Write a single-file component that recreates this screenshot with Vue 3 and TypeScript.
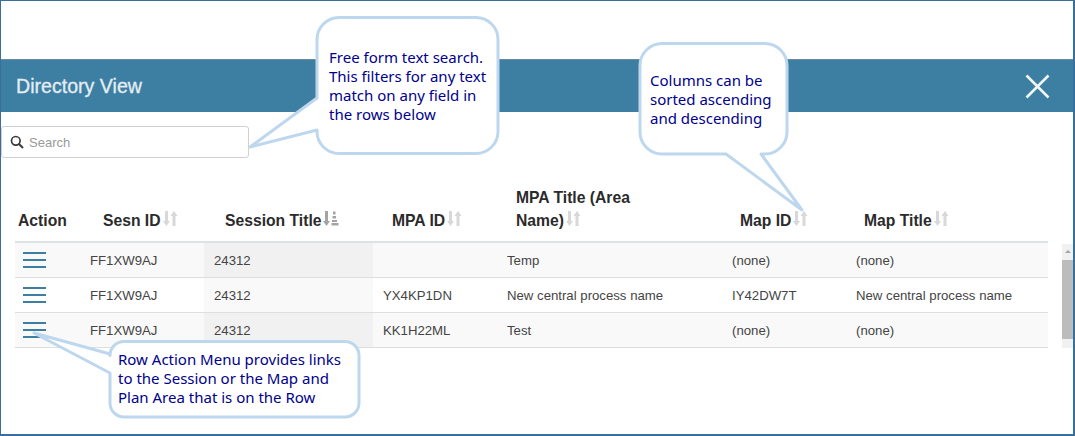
<script setup lang="ts">
interface Row { sesn: string; title: string; mpaId: string; mpaTitle: string; mapId: string; mapTitle: string }
const rows: Row[] = [
  { sesn: 'FF1XW9AJ', title: '24312', mpaId: '', mpaTitle: 'Temp', mapId: '(none)', mapTitle: '(none)' },
  { sesn: 'FF1XW9AJ', title: '24312', mpaId: 'YX4KP1DN', mpaTitle: 'New central process name', mapId: 'IY42DW7T', mapTitle: 'New central process name' },
  { sesn: 'FF1XW9AJ', title: '24312', mpaId: 'KK1H22ML', mpaTitle: 'Test', mapId: '(none)', mapTitle: '(none)' },
]
const heads = [
  { label: 'Sesn ID', active: false },
  { label: 'Session Title', active: true },
  { label: 'MPA ID', active: false },
  { label: 'MPA Title (Area Name)', active: false },
  { label: 'Map ID', active: false },
  { label: 'Map Title', active: false },
]
</script>

<template>
  <div class="frame">
    <header class="bar">
      <h1 class="title">Directory View</h1>
      <svg class="close" width="25" height="25" viewBox="0 0 25 25">
        <path d="M1.5 1.5 L23.5 23.5 M23.5 1.5 L1.5 23.5" stroke="#f1f6f9" stroke-width="2.6" fill="none" />
      </svg>
    </header>

    <div class="search">
      <svg width="14" height="14" viewBox="0 0 14 14">
        <circle cx="5.8" cy="5.8" r="4.3" fill="none" stroke="#3a3a3a" stroke-width="1.7" />
        <path d="M9 9 L13 13" stroke="#3a3a3a" stroke-width="2" />
      </svg>
      <span class="placeholder">Search</span>
    </div>

    <div class="tablewrap">
      <table class="grid">
        <thead>
          <tr>
            <th>Action</th>
            <th v-for="h in heads" :key="h.label">
              {{ h.label }}<svg class="sort" width="17" height="17" viewBox="0 0 17 17">
                <template v-if="h.active">
                  <path d="M3 1 H6 V11 H8 L4.5 16 L1 11 H3 Z" fill="#a4a4a4" />
                  <path d="M11 1.5 h2.5 v3 h-2.5z M10.5 6 h3.5 v2.5 h-3.5z M10 10 h5 v2 h-5z M9.5 13 h7 v2.5 h-7z" fill="#a4a4a4" />
                </template>
                <template v-else>
                  <path d="M3 1 H6 V11 H8 L4.5 16 L1 11 H3 Z" fill="#d8d8d8" />
                  <path d="M10.5 16 H13.5 V6 H15.5 L12 1 L8.5 6 H10.5 Z" fill="#d8d8d8" />
                </template>
              </svg>
            </th>
          </tr>
        </thead>
        <tbody>
          <tr v-for="(r, i) in rows" :key="i">
            <td>
              <svg class="menu" width="23" height="16" viewBox="0 0 23 16">
                <path d="M0 1 H23 M0 8 H23 M0 15 H23" stroke="#3d7ea3" stroke-width="2" />
              </svg>
            </td>
            <td>{{ r.sesn }}</td>
            <td>{{ r.title }}</td>
            <td>{{ r.mpaId }}</td>
            <td>{{ r.mpaTitle }}</td>
            <td>{{ r.mapId }}</td>
            <td>{{ r.mapTitle }}</td>
          </tr>
        </tbody>
      </table>
      <div class="scrollbar">
        <span class="arrow"></span>
        <span class="thumb"></span>
      </div>
    </div>

    <svg class="balloons" width="1075" height="436" viewBox="0 0 1075 436">
      <path class="balloon" d="M339 17.5 H476 A22 22 0 0 1 498 39.5 V131.5 A22 22 0 0 1 476 153.5 H339 A22 22 0 0 1 317 131.5 V130 L250 147 L317 98 V39.5 A22 22 0 0 1 339 17.5 Z" />
      <path class="balloon" d="M662 43.5 H765 A22 22 0 0 1 787 65.5 V132 A22 22 0 0 1 765 154 H761 L802 210 L726 154 H662 A22 22 0 0 1 640 132 V65.5 A22 22 0 0 1 662 43.5 Z" />
      <path class="balloon" d="M124 341.5 H345 A14 14 0 0 1 359 355.5 V403 A14 14 0 0 1 345 417 H124 A14 14 0 0 1 110 403 V373 L34 333 L110 354 V355.5 A14 14 0 0 1 124 341.5 Z" />
    </svg>
    <p class="note note-search">Free form text search. This filters for any text match on any field in the rows below</p>
    <p class="note note-sort">Columns can be sorted ascending and descending</p>
    <p class="note note-row">Row Action Menu provides links to the Session or the Map and Plan Area that is on the Row</p>
  </div>
</template>

<style>
html, body { margin: 0; background: #fff; }
</style>

<style scoped>
.frame {
  position: relative;
  box-sizing: border-box;
  width: 1075px;
  height: 436px;
  padding-top: 58px;
  border: 1px solid #3a6e9c;
  border-width: 1px 2px 2px 1px;
  background: #fff;
  font-family: "Liberation Sans", Arial, sans-serif;
  overflow: hidden;
}
.bar {
  box-sizing: border-box;
  height: 53px;
  display: flex;
  align-items: center;
  justify-content: space-between;
  padding: 0 23px 0 15px;
  background: #3d7ea3;
  border-top: 1px solid #6d8a9b;
}
.title {
  margin: 0;
  font-size: 19.6px;
  font-weight: 400;
  color: #e4eef3;
  -webkit-text-stroke: 0.3px #e4eef3;
}
.close { display: block; }
.search {
  box-sizing: border-box;
  width: 248px;
  height: 32px;
  margin-top: 14px;
  display: flex;
  align-items: center;
  gap: 5px;
  padding-left: 8px;
  border: 1px solid #d0d0d0;
  border-radius: 3px;
  background: #fff;
}
.placeholder { font-size: 13px; color: #9a9a9a; }
.tablewrap {
  display: flex;
  align-items: flex-end;
  gap: 14px;
  margin-top: 28px;
  padding-left: 14px;
}
.grid {
  width: 1033px;
  table-layout: fixed;
  border-collapse: collapse;
  font-size: 13.2px;
  color: #444;
}
th {
  box-sizing: border-box;
  padding: 0 0 9px;
  text-align: left;
  vertical-align: bottom;
  font-size: 15.7px;
  font-weight: 700;
  line-height: 23px;
  color: #2b2b2b;
  border-bottom: 2px solid #dde2e6;
}
.sort { vertical-align: -1px; margin-left: 1px; }
th:nth-child(1) { width: 65px; padding-left: 3px; }
th:nth-child(2) { width: 124px; padding-left: 23px; }
th:nth-child(3) { width: 169px; padding-left: 21px; }
th:nth-child(4) { width: 124px; padding-left: 19px; }
th:nth-child(5) { width: 225px; padding-left: 19px; padding-right: 60px; }
th:nth-child(6) { width: 124px; padding-left: 18px; }
th:nth-child(7) { width: 202px; padding-left: 18px; }
td {
  box-sizing: border-box;
  height: 35px;
  padding: 1px 0 0 10px;
  border-bottom: 1px solid #dedede;
  vertical-align: middle;
  white-space: nowrap;
}
tbody tr:nth-child(odd) td { background: #f9f9f9; }
tbody tr:nth-child(odd) td:nth-child(3) { background: #f1f1f1; }
tbody tr:nth-child(even) td { background: #fff; }
tbody tr:nth-child(even) td:nth-child(3) { background: #f9f9f9; }
td:first-child { padding-left: 8px; }
.menu { display: block; }
.scrollbar {
  position: relative;
  box-sizing: border-box;
  width: 11px;
  height: 104px;
  padding-top: 16px;
  background: #f1f1f1;
}
.arrow {
  position: absolute;
  top: 6px;
  left: 3px;
  width: 0;
  height: 0;
  border-left: 3px solid transparent;
  border-right: 3px solid transparent;
  border-bottom: 3px solid #a3a3a3;
}
.thumb {
  display: block;
  height: 79px;
  background: #bcbcbc;
}
.balloons {
  position: absolute;
  left: -1px;
  top: -1px;
  pointer-events: none;
}
.balloon {
  fill: #fff;
  stroke: #bdd7ee;
  stroke-width: 3;
  stroke-linejoin: round;
}
.note {
  position: absolute;
  margin: 0;
  font-family: "Noto Sans", "Open Sans", sans-serif;
  font-size: 15px;
  line-height: 19px;
  color: #00008c;
}
.note-search { left: 328px; top: 47px; width: 162px; }
.note-sort { left: 649px; top: 70px; width: 130px; }
.note-row { left: 117px; top: 349px; width: 236px; }
</style>
